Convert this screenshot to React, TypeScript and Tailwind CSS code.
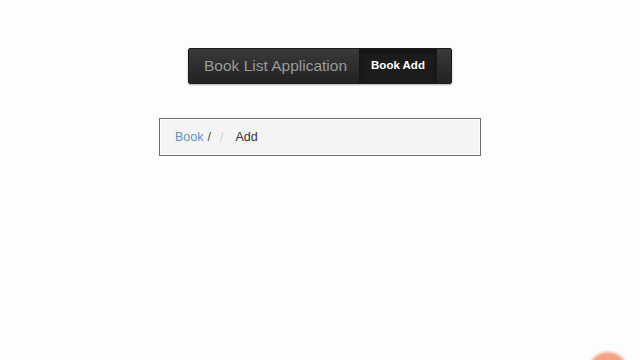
export default function App() {
  return (
    <div
      className="relative w-[640px] h-[360px] overflow-hidden bg-[#fdfdfd] flex flex-col items-center pt-[48px]"
      style={{ fontFamily: '"Liberation Sans", Arial, sans-serif' }}
    >
      <div className="flex items-stretch h-[36px] w-[264px] bg-gradient-to-b from-[#3a3a3a] to-[#222222] border border-[#1a1a1a] rounded-[2px] shadow-[0_1px_2px_rgba(0,0,0,0.3)]">
        <div className="flex items-center pl-[15px] pr-[12px] text-[15.5px] text-[#9a9a9a]">
          Book List Application
        </div>
        <div className="flex items-center px-[12px] bg-[#1c1c1c] shadow-[inset_0_2px_6px_rgba(0,0,0,0.35)] text-[11.5px] font-bold text-white">
          Book Add
        </div>
      </div>
      <div className="mt-[34px] w-[322px] h-[38px] border border-[#6e6e6e] p-[1px] bg-white">
        <div className="w-full h-full bg-[#f4f4f4] flex items-center pl-[14px] text-[12.5px]">
          <span className="text-[#5a94c8]">Book</span>
          <span className="text-[#444] ml-[4px]">/</span>
          <span className="text-[#d0d0d0] ml-[9px]">/</span>
          <span className="text-[#333] ml-[12px]">Add</span>
        </div>
      </div>
      <div className="absolute left-[588px] top-[352px] w-[40px] h-[40px] rounded-full bg-[#f2a384] blur-[1.5px]" />
    </div>
  );
}
